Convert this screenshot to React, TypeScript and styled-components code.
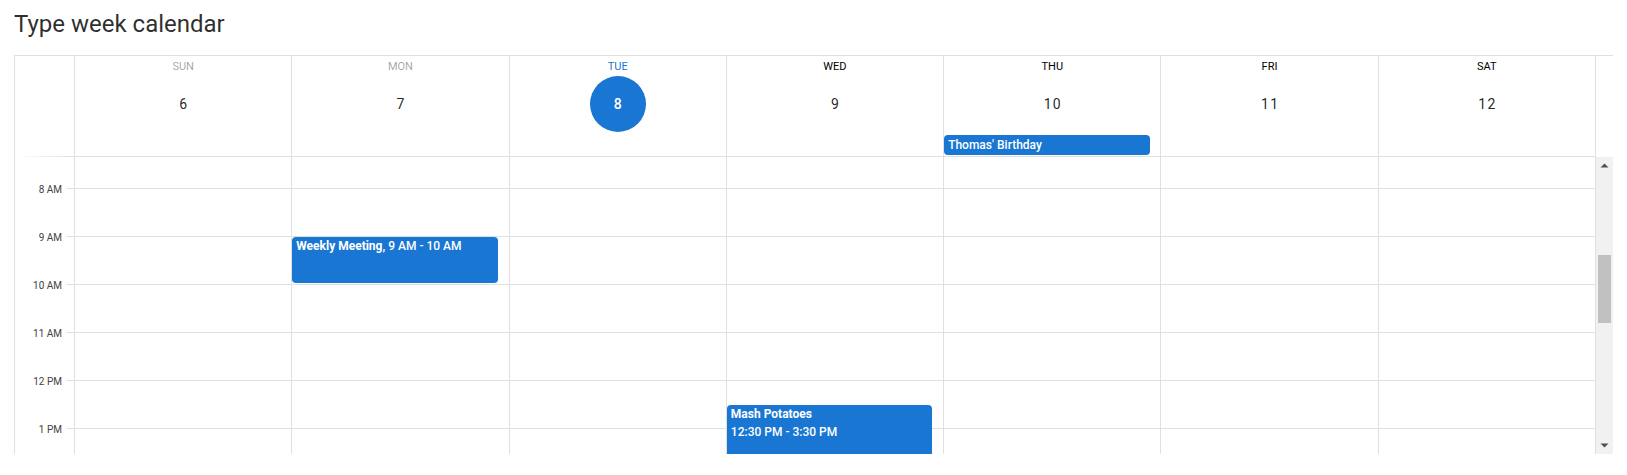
import React from "react";
import styled, { createGlobalStyle, css } from "styled-components";

const HOUR = 48;
const VISIBLE = 297;
const SCROLL_TOP = 353;
const FIRST_HOUR = 7;
const LAST_HOUR = 13;
const BLUE = "#1976d2";
const LINE = "#e0e0e0";

const GlobalStyle = createGlobalStyle`
  html, body { margin: 0; padding: 0; background: #fff; }
  body { font-family: Roboto, "Noto Sans", Arial, sans-serif; -webkit-font-smoothing: antialiased; }
  * { box-sizing: border-box; }
`;

const Page = styled.div`
  padding: 8px 14px 0;
`;

const Title = styled.h1`
  margin: 0 0 15px;
  font-size: 24px;
  line-height: 32px;
  font-weight: 400;
  color: rgba(0, 0, 0, 0.84);
`;

const Calendar = styled.div`
  border-left: 1px solid ${LINE};
  border-top: 1px solid ${LINE};
  display: flex;
  flex-direction: column;
`;

const Head = styled.div`
  display: flex;
`;

const HeadGutter = styled.div`
  width: 60px;
  flex: none;
  border-right: 1px solid ${LINE};
  position: relative;
  &::after {
    content: "";
    position: absolute;
    left: 0;
    right: 0;
    bottom: 0;
    height: 1px;
    background: linear-gradient(90deg, transparent, ${LINE});
  }
`;

const HeadDay = styled.div`
  flex: 1 1 0;
  min-width: 0;
  border-right: 1px solid ${LINE};
  border-bottom: 1px solid ${LINE};
  display: flex;
  flex-direction: column;
  align-items: center;
  padding-bottom: 1px;
`;

const HeadSpacer = styled.div`
  width: 17px;
  flex: none;
`;

type DayState = "past" | "today" | "future";

const Weekday = styled.div<{ $state: DayState }>`
  padding-top: 3px;
  font-size: 11px;
  line-height: 16px;
  text-transform: uppercase;
  color: ${(p) =>
    p.$state === "past" ? "rgba(0,0,0,0.38)" : p.$state === "today" ? BLUE : "#000"};
`;

const DayLabel = styled.div`
  padding: 1px 0 3px;
`;

const DayButton = styled.div<{ $today: boolean }>`
  width: 56px;
  height: 56px;
  border-radius: 50%;
  display: flex;
  align-items: center;
  justify-content: center;
  font-size: 14px;
  letter-spacing: 0.0892857em;
  text-indent: 0.0892857em;
  ${(p) =>
    p.$today
      ? css`
          background: ${BLUE};
          color: #fff;
          font-weight: 500;
        `
      : css`
          color: rgba(0, 0, 0, 0.87);
          font-weight: 400;
        `}
`;

const AllDayEvent = styled.div`
  align-self: stretch;
  margin-right: 10px;
  height: 20px;
  line-height: 20px;
  padding-left: 4px;
  border-radius: 4px;
  background: ${BLUE};
  color: #fff;
  font-size: 12px;
  font-weight: 500;
  white-space: nowrap;
  overflow: hidden;
`;

const Body = styled.div`
  display: flex;
  height: ${VISIBLE}px;
`;

const ScrollArea = styled.div`
  flex: 1 1 auto;
  min-width: 0;
  overflow: hidden;
`;

const Pane = styled.div<{ $offset: number }>`
  display: flex;
  margin-top: ${(p) => -p.$offset}px;
`;

const GutterColumn = styled.div`
  width: 60px;
  flex: none;
  border-right: 1px solid ${LINE};
`;

const GutterInterval = styled.div<{ $first: boolean }>`
  height: ${HOUR}px;
  position: relative;
  display: flex;
  justify-content: flex-end;
  align-items: flex-start;
  padding-right: 8px;
  ${(p) =>
    !p.$first &&
    css`
      &::after {
        content: "";
        position: absolute;
        top: 0;
        right: 0;
        width: 8px;
        height: 1px;
        background: ${LINE};
      }
    `}
`;

const IntervalText = styled.span`
  display: block;
  margin-top: -6px;
  padding-right: 4px;
  font-size: 10px;
  line-height: 15px;
  color: #424242;
  white-space: nowrap;
`;

const DayColumn = styled.div`
  flex: 1 1 0;
  min-width: 0;
  border-right: 1px solid ${LINE};
  position: relative;
`;

const DayInterval = styled.div<{ $first: boolean }>`
  height: ${HOUR}px;
  border-top: ${(p) => (p.$first ? "none" : `1px solid ${LINE}`)};
`;

const TimedEvent = styled.div`
  position: absolute;
  left: 0;
  right: 11px;
  border-radius: 4px;
  background: ${BLUE};
  color: #fff;
  font-size: 12px;
  line-height: 18px;
  font-weight: 500;
  padding-left: 4px;
  overflow: hidden;
  white-space: nowrap;
  strong {
    font-weight: 700;
  }
`;

const EventLine = styled.div``;

const Scrollbar = styled.div`
  width: 17px;
  flex: none;
  background: #f1f1f1;
  display: flex;
  flex-direction: column;
`;

const ScrollArrow = styled.div`
  height: 17px;
  flex: none;
  display: flex;
  svg {
    display: block;
  }
`;

const Track = styled.div`
  flex: 1 1 auto;
`;

const Thumb = styled.div`
  margin: 0 2px;
  background: #c1c1c1;
`;

interface Day {
  name: string;
  date: number;
  state: DayState;
}

const days: Day[] = [
  { name: "Sun", date: 6, state: "past" },
  { name: "Mon", date: 7, state: "past" },
  { name: "Tue", date: 8, state: "today" },
  { name: "Wed", date: 9, state: "future" },
  { name: "Thu", date: 10, state: "future" },
  { name: "Fri", date: 11, state: "future" },
  { name: "Sat", date: 12, state: "future" },
];

interface TEvent {
  day: number;
  name: string;
  start: number;
  end: number;
  time: string;
  twoLine: boolean;
}

const allDay = [{ day: 4, name: "Thomas' Birthday" }];

const timed: TEvent[] = [
  { day: 1, name: "Weekly Meeting", start: 9, end: 10, time: "9 AM - 10 AM", twoLine: false },
  { day: 3, name: "Mash Potatoes", start: 12.5, end: 15.5, time: "12:30 PM - 3:30 PM", twoLine: true },
];

const hours = Array.from({ length: LAST_HOUR - FIRST_HOUR + 1 }, (_, i) => FIRST_HOUR + i);

function hourLabel(h: number) {
  const suffix = h < 12 ? "AM" : "PM";
  const v = h % 12 === 0 ? 12 : h % 12;
  return `${v} ${suffix}`;
}

const trackLen = VISIBLE - 34;
const total = 24 * HOUR;
const thumbLen = Math.round((trackLen * VISIBLE) / total);
const thumbTop = Math.round(((trackLen - thumbLen) * SCROLL_TOP) / (total - VISIBLE));
const paneOffset = SCROLL_TOP - FIRST_HOUR * HOUR;

export default function App() {
  return (
    <>
      <GlobalStyle />
      <Page>
        <Title>Type week calendar</Title>
        <Calendar>
          <Head>
            <HeadGutter />
            {days.map((d, i) => (
              <HeadDay key={d.name}>
                <Weekday $state={d.state}>{d.name}</Weekday>
                <DayLabel>
                  <DayButton $today={d.state === "today"}>{d.date}</DayButton>
                </DayLabel>
                {allDay
                  .filter((e) => e.day === i)
                  .map((e) => (
                    <AllDayEvent key={e.name}>{e.name}</AllDayEvent>
                  ))}
              </HeadDay>
            ))}
            <HeadSpacer />
          </Head>
          <Body>
            <ScrollArea>
              <Pane $offset={paneOffset}>
                <GutterColumn>
                  {hours.map((h) => (
                    <GutterInterval key={h} $first={h === FIRST_HOUR}>
                      {h > FIRST_HOUR && <IntervalText>{hourLabel(h)}</IntervalText>}
                    </GutterInterval>
                  ))}
                </GutterColumn>
                {days.map((d, i) => (
                  <DayColumn key={d.name}>
                    {hours.map((h) => (
                      <DayInterval key={h} $first={h === FIRST_HOUR} />
                    ))}
                    {timed
                      .filter((e) => e.day === i)
                      .map((e) => (
                        <TimedEvent
                          key={e.name}
                          style={{
                            top: (e.start - FIRST_HOUR) * HOUR + 1,
                            height: Math.min(
                              (e.end - e.start) * HOUR - 2,
                              (LAST_HOUR + 1 - e.start) * HOUR
                            ),
                          }}
                        >
                          {e.twoLine ? (
                            <>
                              <EventLine>
                                <strong>{e.name}</strong>
                              </EventLine>
                              <EventLine>{e.time}</EventLine>
                            </>
                          ) : (
                            <EventLine>
                              <strong>{e.name}</strong>, {e.time}
                            </EventLine>
                          )}
                        </TimedEvent>
                      ))}
                  </DayColumn>
                ))}
              </Pane>
            </ScrollArea>
            <Scrollbar>
              <ScrollArrow>
                <svg width="17" height="17" viewBox="0 0 17 17">
                  <polygon points="4.5,10.5 12.5,10.5 8.5,6.5" fill="#505050" />
                </svg>
              </ScrollArrow>
              <Track>
                <Thumb style={{ marginTop: thumbTop, height: thumbLen }} />
              </Track>
              <ScrollArrow>
                <svg width="17" height="17" viewBox="0 0 17 17">
                  <polygon points="4.5,6.5 12.5,6.5 8.5,10.5" fill="#505050" />
                </svg>
              </ScrollArrow>
            </Scrollbar>
          </Body>
        </Calendar>
      </Page>
    </>
  );
}
